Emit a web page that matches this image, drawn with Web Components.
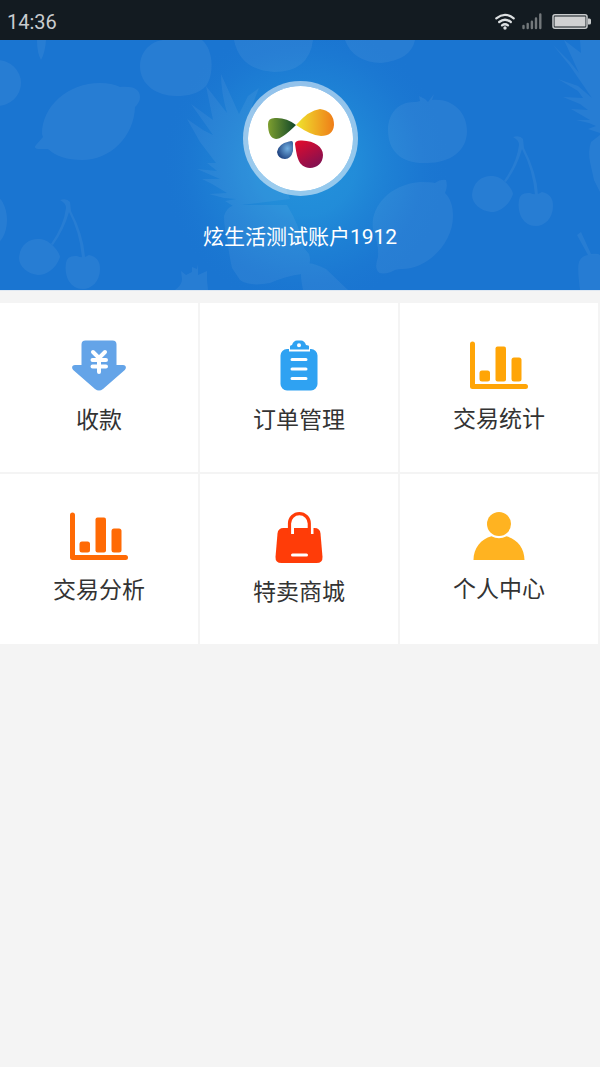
<!DOCTYPE html>
<html lang="zh-CN">
<head>
<meta charset="utf-8">
<meta name="viewport" content="width=device-width, initial-scale=1">
<title>炫生活</title>
<style>
  body { margin: 0; background: #f4f4f4; font-family: Roboto, "Noto Sans CJK SC", sans-serif; }
</style>
</head>
<body>
<app-home></app-home>

<script>
const icons = {
  receive: `<svg width="54" height="51" viewBox="0 0 54 51" aria-hidden="true">
    <path fill="#64a4e8" d="M13.500 .5h27a4 4 0 0 1 4 4V25h6.500c3 0 3.800 3 1.800 5L31 49q-4 3-8 0L1.200 30C-.8 28 0 25 3 25h6.500V4.500a4 4 0 0 1 4-4z"/>
    <path fill="none" stroke="#fff" stroke-width="4" stroke-linecap="round" stroke-linejoin="round" d="M21 12l6 6 6-6M20.500 20h13.500M20.500 26.500h13.500M27 18v14"/></svg>`,
  orders: `<svg width="38" height="51" viewBox="0 0 38 51" aria-hidden="true">
    <path fill="#2fa2f2" d="M8 9h1v2.500h21V9h1a6.500 6.500 0 0 1 6.500 6.500V44a6.500 6.500 0 0 1-6.500 6.500H7A6.500 6.500 0 0 1 .5 44V15.500A6.500 6.500 0 0 1 7 9z"/>
    <path fill="#2fa2f2" fill-rule="evenodd" d="M10 9.500V6.500Q10 5 12 5q1.500-4.500 5-4.500h4Q24.500 .5 26 5q3 0 3 1.500v3zM19 3.200a2 2 0 1 0 0 4 2 2 0 0 0 0-4z"/>
    <path stroke="#fff" stroke-width="3" stroke-linecap="round" d="M12 19.500h14M12 29h14M12 38.500h14"/></svg>`,
  chart: `<svg width="58" height="50" viewBox="0 0 58 50" aria-hidden="true">
    <path fill="none" stroke="currentColor" stroke-width="5" stroke-linecap="round" stroke-linejoin="round" d="M2.500 4v42.500h53"/>
    <g fill="currentColor"><rect x="9.500" y="30.500" width="10.500" height="11" rx="2.500"/><rect x="25.500" y="6.500" width="10.500" height="35" rx="2"/><rect x="41.500" y="17.500" width="10" height="24" rx="2.500"/></g></svg>`,
  mall: `<svg width="48" height="52" viewBox="0 0 48 52" aria-hidden="true">
    <path fill="#ff3c08" d="M8.500 17h31q5.500 0 6 5.500L47.500 46q.3 6-6 6h-35q-6.300 0-6-6L2.500 22.500Q3 17 8.500 17z"/>
    <path fill="none" stroke="#fff" stroke-width="3" d="M17.500 16v7M37 16v7"/>
    <path fill="none" stroke="#ff3c08" stroke-width="3.200" d="M14.500 23V12.500a9.900 9.900 0 0 1 19.800 0V23"/>
    <path stroke="#fff" stroke-width="3" stroke-linecap="round" d="M17.500 44h14"/></svg>`,
  profile: `<svg width="52" height="49" viewBox="0 0 52 49" aria-hidden="true">
    <g fill="#ffb321"><circle cx="26" cy="13" r="12"/><path d="M.5 49C.5 37 8 28 18.500 25.200Q26 29.500 33.500 25.200C44 28 51.500 37 51.500 49z"/></g></svg>`
};

class StatusBar extends HTMLElement {
  constructor() {
    super();
    this.attachShadow({ mode: "open" }).innerHTML = `
      <style>
        :host { display: flex; align-items: center; justify-content: space-between; box-sizing: border-box;
          height: 40px; padding: 4px 9px 0 7px; background: #131b21; color: #c9cccf; font-size: 20px; line-height: 24px; }
        .signals { display: flex; align-items: center; gap: 7px; }
        svg { display: block; }
      </style>
      <slot></slot>
      <div class="signals">
        <svg width="20" height="18" viewBox="0 0 20 18" role="img" aria-label="Wi-Fi">
          <g fill="none" stroke="#dde0e2" stroke-width="2.300" stroke-linecap="round"><path d="M1.300 5.300q8.700-6.800 17.400 0"/><path d="M4.200 9q5.800-4.600 11.600 0"/><path d="M7 12.400q3-2.400 6 0"/></g><circle cx="10" cy="15" r="1.700" fill="#dde0e2"/></svg>
        <svg width="20" height="18" viewBox="0 0 20 18" role="img" aria-label="信号">
          <path stroke="#73787b" stroke-width="2.400" stroke-linecap="round" d="M1.500 13v2M5.700 11v4M9.900 8.800v6.200M14 5.500v9.500M18.300 1.500v13.500"/></svg>
        <svg width="42" height="18" viewBox="0 0 42 18" role="img" aria-label="电量">
          <rect x="4" y="1.800" width="34" height="13.500" rx="2" fill="none" stroke="#c9cccd" stroke-width="1.500"/><rect x="5.500" y="3.500" width="31" height="10" fill="#d0d1d2"/><path fill="#c9cccd" d="M39 5.500h1.500q1.500 0 1.500 1.500v3q0 1.500-1.500 1.500H39z"/></svg>
      </div>`;
  }
}

class AccountHeader extends HTMLElement {
  constructor() {
    super();
    this.attachShadow({ mode: "open" }).innerHTML = `
      <style>
        :host { display: flex; flex-direction: column; align-items: center; gap: 26px; position: relative; overflow: hidden;
          box-sizing: border-box; padding: 41px 0 38px; border-bottom: 1px solid #dfe8f2;
          background: #1a75d1; color: #fff; }
        .backdrop { position: absolute; inset: 0; width: 100%; height: 100%; }
        .avatar { position: relative; box-sizing: border-box; width: 115px; height: 115px; border: 5px solid rgba(255,255,255,.52);
          border-radius: 50%; background: #fff; background-clip: padding-box; }
        .avatar svg { display: block; }
        h1 { position: relative; margin: 0; font-size: 21px; line-height: 30px; font-weight: 400; }
      </style>
      <svg class="backdrop" viewBox="0 40 600 250" preserveAspectRatio="xMidYMid slice" aria-hidden="true">
        <defs>
          <radialGradient id="glow" gradientUnits="userSpaceOnUse" cx="305" cy="165" r="145">
            <stop offset="0" stop-color="#2493dc"/><stop offset=".35" stop-color="#2390da" stop-opacity=".85"/><stop offset=".7" stop-color="#1f84d6" stop-opacity=".45"/><stop offset="1" stop-color="#1a75d1" stop-opacity="0"/>
          </radialGradient>
          <g id="cherries">
            <path d="M513 137q7-2 10 2l1 9q13 25 14 47h-3q-2-25-13-46q-5 18-16 33l-2-1q13-19 15-36q0-5-6-8z"/>
            <path d="M472 195C473 181 483 175 493 176C504 177 513 190 513 194C509 206 499 212 491 212C481 211 472 204 472 195z"/>
            <path d="M519 200Q520 192 530 193Q536 196 542 192Q553 194 553 206C553 219 544 226 536 226C523 226 517 213 519 200z"/>
          </g>
        </defs>
        <rect y="40" width="600" height="250" fill="url(#glow)"/>
        <g fill="#fff" opacity=".055">
          <path d="M37 40h9q-1 13-5 20q-4-7-4-20z"/>
          <ellipse cx="-3" cy="83" rx="24" ry="23"/>
          <ellipse cx="-8" cy="220" rx="15" ry="25"/>
          <path d="M140 66C140 50 153 40 165 40H202C214 50 214 75 206 86C198 94 188 96 176 96C157 96 140 85 140 66z"/>
          <path d="M234 40h79q-4 32-39 32q-34-2-40-32z"/>
          <path d="M345 40h70q-4 20-34 23q-28-1-36-23z"/>
          <path d="M42 134C42 106 68 83 100 83Q112 83 120 87C133 86 140 89 140 97Q140 102 135 107C134 137 110 160 82 160Q60 160 48 149H38Q33 148 36 145L43 137z"/>
          <path d="M373 229C370 210 386 185 420 182Q430 182 435 183Q440 179 446 180Q448 187 445 193C451 199 453 207 453 216C453 244 427 269 402 269Q395 269 391 272Q379 276 377 270Q375 266 378 257Q379 245 373 229z"/>
          <path d="M388 130C388 112 400 101 416 102L420 101L419 96L425 99L428 102L434 94L432 100C452 98 467 112 467 131C467 151 450 163 427 163C401 164 388 151 388 130z"/>
          <use href="#cherries"/>
          <use href="#cherries" x="-453" y="63"/>
          <path d="M175 290Q182 285 182 279L181 271L186 275L192 272L192 267L197 269L198 264V275L207 271V280L208 290z"/>
          <path d="M233 206L225 201L236 199L224 198L209 194L227 193L212 184L202 179L220 179L197 169L217 171L207 163L216 163L200 142L187 119L203 130L213 135L191 104L213 120L206 86L227 113Q221 92 221 74L239 114L248 96L259 88L252 106L290 199Z"/>
          <path d="M224 216Q226 208 234 205H287Q300 226 304 248L309 254Q313 266 302 274Q286 276 270 283Q250 287 240 280L232 268Q229 254 228 245Q224 228 224 216z"/>
          <path d="M303 290Q299 271 303 265Q308 260 326 269L348 290z"/>
          <path d="M553 45L570 62L579 73L564 40L581 53L580 40H600V133L588 129L596 126L589 123L576 120L590 120L571 109L588 110L580 104L563 97L583 98L578 91L558 79L578 86L592 98L570 66z"/>
          <path d="M600 135L591 142Q588 151 590 162L594 180L600 192z"/>
          <path d="M577 235L581 232L591 254Q598 253 600 255V290H580Q577 267 579 262Q581 256 588 255z"/>
        </g>
      </svg>
      <div class="avatar">
        <svg width="105" height="105" viewBox="0 0 105 105" role="img" aria-label="头像">
          <defs>
            <linearGradient id="green"><stop offset="0" stop-color="#7e9f2f"/><stop offset="1" stop-color="#0f4629"/></linearGradient>
            <linearGradient id="gold"><stop offset="0" stop-color="#efe42e"/><stop offset="1" stop-color="#ef7d18"/></linearGradient>
            <linearGradient id="red" x1="0" y1="0" x2=".6" y2="1"><stop offset="0" stop-color="#e60b2b"/><stop offset="1" stop-color="#851050"/></linearGradient>
            <radialGradient id="blue" cx=".65" cy=".42" r=".65"><stop offset="0" stop-color="#71aee0"/><stop offset="1" stop-color="#204482"/></radialGradient>
          </defs>
          <path fill="url(#green)" d="M48 39Q39 32 29 32Q20 31 20 38Q20 52 28 53Q34 53 48 39z"/>
          <path fill="url(#gold)" d="M48 39Q61 24 72 23Q86 25 86 39Q85 50 73 50Q64 50 48 39z"/>
          <path fill="url(#blue)" d="M45 57V65Q43 73 37 73Q30 73 29 66Q30 58 41 55.500Q45 54 45 57z"/>
          <path fill="url(#red)" d="M47 58Q47 54 54 54.500C67 55 75 61 75 69C75 77 69 82 62 82C50 81 49 71 47 58z"/>
        </svg>
      </div>
      <h1><slot></slot></h1>`;
  }
}

class MenuTile extends HTMLElement {
  constructor() {
    super();
    this.attachShadow({ mode: "open" });
  }
  connectedCallback() {
    this.shadowRoot.innerHTML = `
      <style>
        :host { display: block; background: #fff; }
        a { display: flex; flex-direction: column; align-items: center; gap: 16px; padding: 37px 0;
          color: #333; text-decoration: none; font-size: 23px; line-height: 28px; }
        svg { display: block; }
        .icon { color: var(--icon-color, #ffa507); }
      </style>
      <a href="#${this.getAttribute("target")}"><span class="icon">${icons[this.getAttribute("icon")]}</span><slot></slot></a>`;
  }
}

class AppHome extends HTMLElement {
  constructor() {
    super();
    this.attachShadow({ mode: "open" }).innerHTML = `
      <style>
        :host { display: block; }
        nav { display: grid; grid-template-columns: repeat(3, 1fr); gap: 2px; margin-top: 12px; padding-right: 2px; }
        .orange { --icon-color: #ff6a05; }
      </style>
      <status-bar>14:36</status-bar>
      <main>
        <account-header>炫生活测试账户1912</account-header>
        <nav>
          <menu-tile icon="receive" target="receive">收款</menu-tile>
          <menu-tile icon="orders" target="orders">订单管理</menu-tile>
          <menu-tile icon="chart" target="statistics">交易统计</menu-tile>
          <menu-tile icon="chart" target="analysis" class="orange">交易分析</menu-tile>
          <menu-tile icon="mall" target="mall">特卖商城</menu-tile>
          <menu-tile icon="profile" target="profile">个人中心</menu-tile>
        </nav>
      </main>`;
  }
}

customElements.define("status-bar", StatusBar);
customElements.define("account-header", AccountHeader);
customElements.define("menu-tile", MenuTile);
customElements.define("app-home", AppHome);
</script>
</body>
</html>
